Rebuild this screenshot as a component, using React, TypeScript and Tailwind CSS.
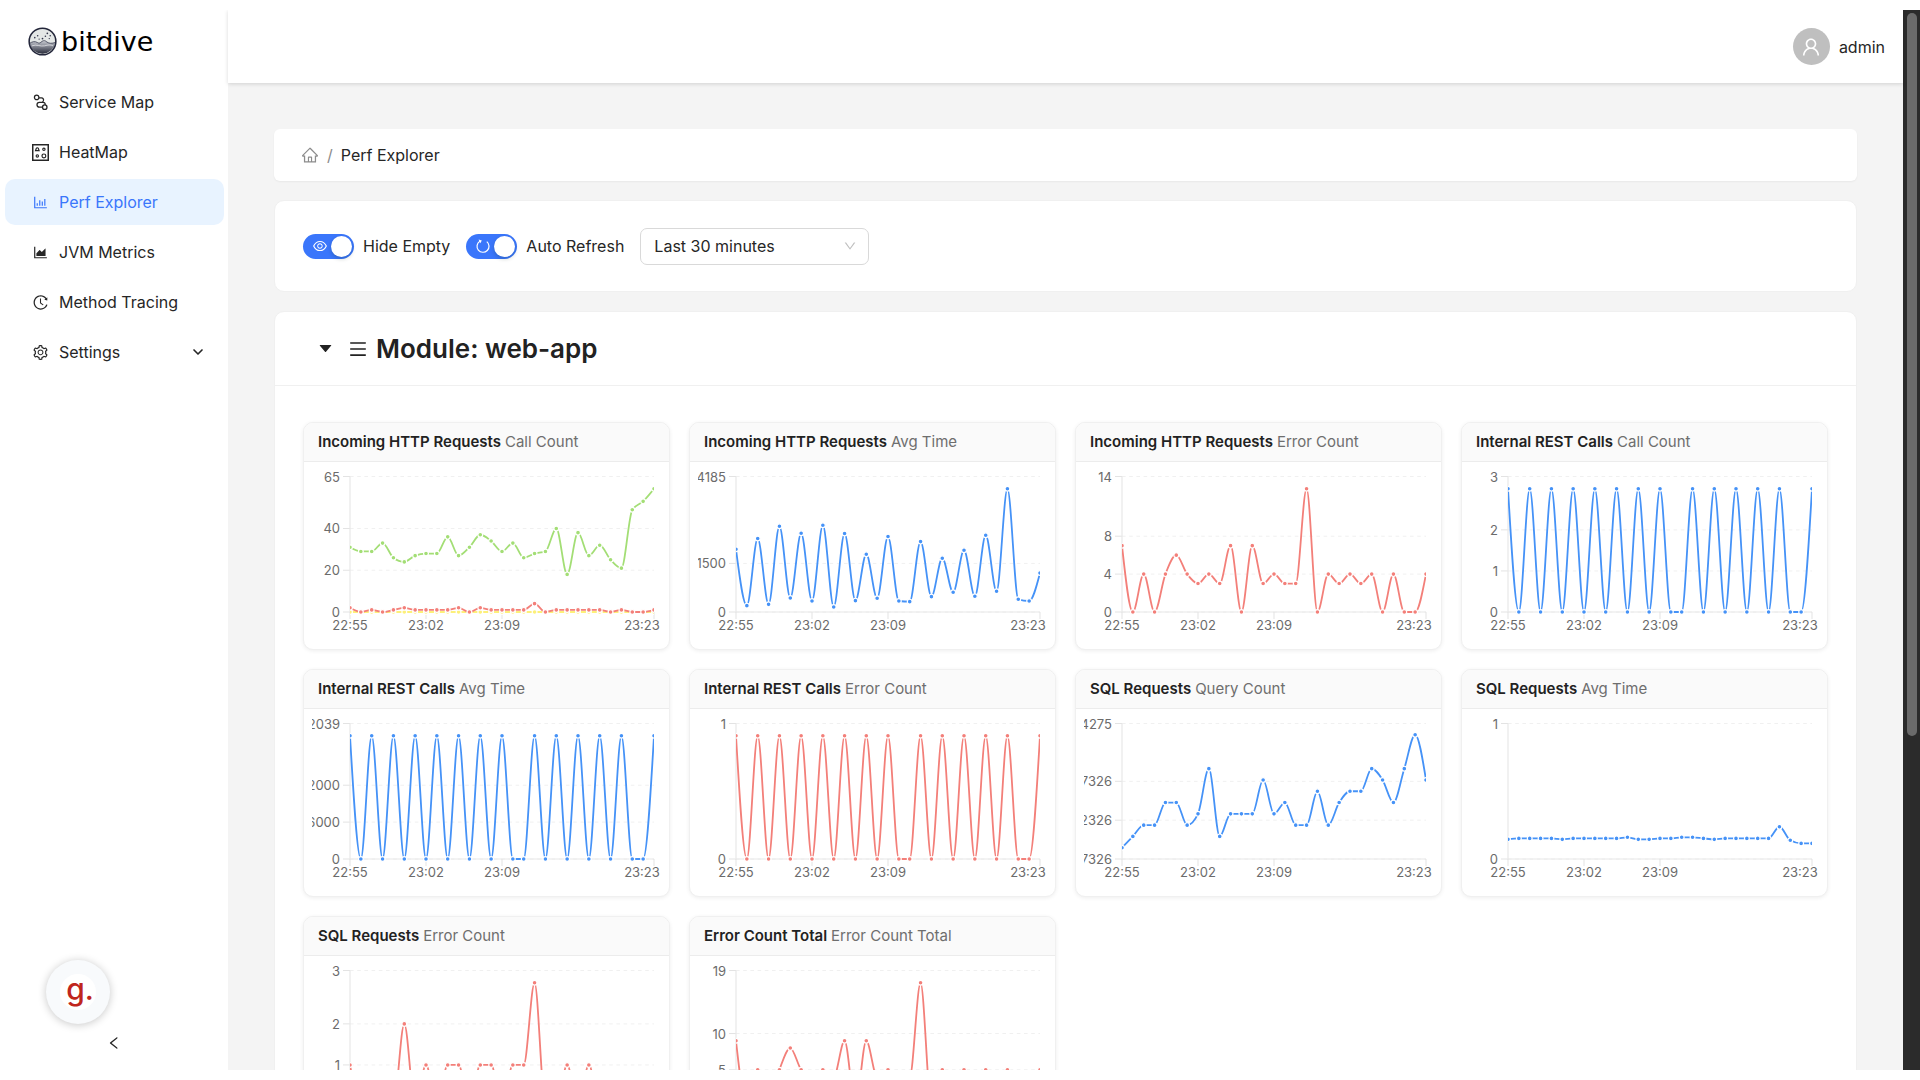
import { useId } from "react";
import {
  AiFillCaretDown,
  AiOutlineAreaChart,
  AiOutlineBarChart,
  AiOutlineDown,
  AiOutlineEye,
  AiOutlineHistory,
  AiOutlineHome,
  AiOutlineLeft,
  AiOutlineMenu,
  AiOutlineSetting,
  AiOutlineUser,
} from "react-icons/ai";
import { FiChevronDown } from "react-icons/fi";

const GREEN = "#a3de75";
const YELLOW = "#fdf07a";
const RED = "#f37f79";
const BLUE = "#4592f7";

type Series = { color: string; values: number[] };
type Tick = { at: number; label: string };
type Metric = { group: string; name: string; max: number; ticks: Tick[]; series: Series[] };

const ticks = (...values: number[]): Tick[] => values.map((v) => ({ at: v, label: String(Math.round(v)) }));

const pulses = (peak: number) =>
  [1, 0, 1, 0, 1, 0, 1, 0, 1, 0, 1, 0, 1, 0, 1, 0, 0, 1, 0, 1, 0, 1, 0, 1, 0, 1, 0, 0, 1].map((v) => v * peak);

const metrics: Metric[] = [
  {
    group: "Incoming HTTP Requests",
    name: "Call Count",
    max: 64.9,
    ticks: ticks(0, 20, 40, 64.9),
    series: [
      { color: YELLOW, values: Array(29).fill(0) },
      { color: RED, values: [2, 0, 1, 0, 1, 2, 1, 1, 1, 1, 2, 0, 2, 1, 1, 1, 1, 4, 0, 1, 1, 1, 1, 1, 0, 1, 0, 0, 1] },
      {
        color: GREEN,
        values: [31, 29, 29, 33, 26, 24, 27, 28, 28, 36, 27, 31, 37, 34, 29, 33, 26, 28, 29, 40, 18, 38, 27, 32, 25, 21, 49, 53, 59],
      },
    ],
  },
  {
    group: "Incoming HTTP Requests",
    name: "Avg Time",
    max: 4185,
    ticks: ticks(0, 1500, 4185),
    series: [
      {
        color: BLUE,
        values: [
          1938, 196, 2268, 237, 2649, 433, 2433, 340, 2680, 155, 2423, 350, 1783, 423, 2330, 340, 320, 2175, 474, 1660, 608, 1907,
          485, 2371, 639, 3805, 392, 340, 1206,
        ],
      },
    ],
  },
  {
    group: "Incoming HTTP Requests",
    name: "Error Count",
    max: 14.3,
    ticks: ticks(0, 4, 8, 14.3),
    series: [{ color: RED, values: [7, 0, 4, 0, 4, 6, 4, 3, 4, 3, 7, 0, 7, 3, 4, 3, 3, 13, 0, 4, 3, 4, 3, 4, 0, 4, 0, 0, 4] }],
  },
  {
    group: "Internal REST Calls",
    name: "Call Count",
    max: 3.3,
    ticks: ticks(0, 1, 2, 3.3),
    series: [{ color: BLUE, values: pulses(3) }],
  },
  {
    group: "Internal REST Calls",
    name: "Avg Time",
    max: 22039,
    ticks: ticks(0, 6000, 12000, 22039),
    series: [{ color: BLUE, values: pulses(20035) }],
  },
  {
    group: "Internal REST Calls",
    name: "Error Count",
    max: 1.1,
    ticks: ticks(0, 1.1),
    series: [{ color: RED, values: pulses(1) }],
  },
  {
    group: "SQL Requests",
    name: "Query Count",
    max: 12,
    ticks: [
      { at: 0, label: "47326" },
      { at: 3.44, label: "52326" },
      { at: 6.88, label: "57326" },
      { at: 12, label: "64275" },
    ],
    series: [{ color: BLUE, values: [1, 2, 3, 3, 5, 5, 3, 4, 8, 2, 4, 4, 4, 7, 4, 5, 3, 3, 6, 3, 5, 6, 6, 8, 7, 5, 8, 11, 7] }],
  },
  {
    group: "SQL Requests",
    name: "Avg Time",
    max: 1,
    ticks: ticks(0, 1),
    series: [
      {
        color: BLUE,
        values: [
          0.145, 0.152, 0.152, 0.152, 0.152, 0.145, 0.152, 0.152, 0.152, 0.152, 0.152, 0.16, 0.145, 0.145, 0.152, 0.152, 0.16,
          0.16, 0.152, 0.145, 0.152, 0.152, 0.152, 0.152, 0.152, 0.238, 0.138, 0.115, 0.115,
        ],
      },
    ],
  },
  {
    group: "SQL Requests",
    name: "Error Count",
    max: 3.3,
    ticks: ticks(0, 1, 2, 3.3),
    series: [{ color: RED, values: [1, 0, 0, 0, 0, 2, 0, 1, 0, 1, 1, 0, 1, 1, 0, 1, 1, 3, 0, 0, 1, 0, 1, 0, 0, 0, 0, 0, 0] }],
  },
  {
    group: "Error Count Total",
    name: "Error Count Total",
    max: 18.7,
    ticks: ticks(0, 5, 10, 18.7),
    series: [{ color: RED, values: [9, 0, 5, 0, 5, 8, 5, 4, 5, 4, 9, 0, 9, 4, 5, 4, 4, 17, 0, 5, 4, 5, 4, 5, 0, 5, 0, 0, 5] }],
  },
];

// plot area inside the 349x171 chart
const X0 = 38;
const X1 = 342;
const Y0 = 142;
const Y1 = 6.5;

// monotone cubic interpolation, so the curve never overshoots a sample
function monotonePath(pts: [number, number][]) {
  const slope = (i: number) => (pts[i + 1][1] - pts[i][1]) / (pts[i + 1][0] - pts[i][0]);
  const last = pts.length - 1;
  const m = pts.map((_, i) => {
    if (i === 0 || i === last) return 0;
    const a = slope(i - 1);
    const b = slope(i);
    if (a * b <= 0) return 0;
    return Math.sign(a) * 2 * Math.min(Math.abs(a), Math.abs(b), Math.abs(a + b) / 4);
  });
  m[0] = (3 * slope(0) - m[1]) / 2;
  m[last] = (3 * slope(last - 1) - m[last - 1]) / 2;
  let d = `M${pts[0][0]},${pts[0][1]}`;
  for (let i = 0; i < last; i++) {
    const [xa, ya] = pts[i];
    const [xb, yb] = pts[i + 1];
    const h = (xb - xa) / 3;
    d += `C${xa + h},${ya + h * m[i]} ${xb - h},${yb - h * m[i + 1]} ${xb},${yb}`;
  }
  return d;
}

function Chart({ metric }: { metric: Metric }) {
  const clip = useId();
  const y = (v: number) => Y0 - (v / metric.max) * (Y0 - Y1);
  const x = (i: number) => X0 + (i * (X1 - X0)) / 28;
  const times = [
    { i: 0, label: "22:55", cx: x(0) },
    { i: 7, label: "23:02", cx: x(7) },
    { i: 14, label: "23:09", cx: x(14) },
    { i: 28, label: "23:23", cx: 330 },
  ];
  return (
    <svg viewBox="0 0 349 171" className="block h-auto w-full overflow-hidden" role="img" aria-label={`${metric.group} ${metric.name}`}>
      <clipPath id={clip}>
        <rect x={X0} y={Y1 - 4} width={X1 - X0} height={Y0 - Y1 + 8} />
      </clipPath>
      {metric.ticks.map((t) => (
        <g key={t.at}>
          <line x1={X0} x2={X1} y1={y(t.at)} y2={y(t.at)} stroke="#f0f0f0" strokeDasharray="3.6 3.6" />
          <line x1={X0 - 7} x2={X0} y1={y(t.at)} y2={y(t.at)} stroke="#e3e3e3" />
          <text x={28} y={y(t.at) + 5} textAnchor="end" className="fill-[#6b6b6b] text-[13px]">
            {t.label}
          </text>
        </g>
      ))}
      <path d={`M${X0},${Y1}V${Y0}H${X1}`} fill="none" stroke="#e8e8e8" strokeWidth="1.2" />
      {times.map((t) => (
        <g key={t.i}>
          <line x1={x(t.i)} x2={x(t.i)} y1={Y0} y2={Y0 + 7} stroke="#e3e3e3" />
          <text x={t.cx} y={160} textAnchor="middle" className="fill-[#6b6b6b] text-[13px]">
            {t.label}
          </text>
        </g>
      ))}
      <g clipPath={`url(#${clip})`}>
        {metric.series.map((s) => (
          <g key={s.color}>
            <path d={monotonePath(s.values.map((v, i) => [x(i), y(v)]))} fill="none" stroke={s.color} strokeWidth="1.8" />
            {s.values.map((v, i) => (
              <circle key={i} cx={x(i)} cy={y(v)} r="2.4" fill={s.color} stroke="#fff" strokeWidth="1.2" />
            ))}
          </g>
        ))}
      </g>
    </svg>
  );
}

function MetricCard({ metric }: { metric: Metric }) {
  return (
    <article className="overflow-hidden rounded-[10px] border border-[#f0f0f0] bg-white shadow-[0_1px_4px_rgba(0,0,0,0.07)]">
      <h3 className="flex h-[39px] items-center gap-1 border-b border-[#ececec] bg-[#fafafa] px-[14px] text-[15px] text-[#6e6e6e]">
        <strong className="font-semibold text-[#222]">{metric.group}</strong>
        {metric.name}
      </h3>
      <div className="p-2">
        <Chart metric={metric} />
      </div>
    </article>
  );
}

function ServiceMapIcon() {
  return (
    <svg viewBox="0 0 16 16" className="size-[17px]" fill="none" stroke="currentColor" strokeWidth="1.2">
      <circle cx="4.4" cy="3.2" r="2.1" />
      <circle cx="12" cy="12.4" r="2.1" />
      <path d="M6.5 3.6h2.4a2 2 0 0 1 1.7 3L9.8 7.8M9.8 7.8H7a2.3 2.3 0 0 0 0 4.6h2.9M9.2 7.8h1.4a2 2 0 0 1 1.8 2.4" />
    </svg>
  );
}

function HeatMapIcon() {
  return (
    <svg viewBox="0 0 16 16" className="size-[17px]" fill="none" stroke="currentColor">
      <rect x="0.7" y="0.7" width="14.6" height="14.6" strokeWidth="1.4" />
      <path d="M3.3 6.2h3.4L6 4.2a1.1 1.1 0 0 0-2 0z" strokeWidth="1.1" />
      <circle cx="11.2" cy="5" r="1.1" strokeWidth="1.1" />
      <circle cx="5" cy="11.2" r="1.1" strokeWidth="1.1" />
      <circle cx="11.2" cy="11.2" r="1.8" strokeWidth="1.1" />
    </svg>
  );
}

function ReloadIcon() {
  return (
    <svg viewBox="0 0 16 16" className="size-4" fill="none" stroke="currentColor" strokeWidth="1.2">
      <path d="M4.8 3.2a6 6 0 1 0 7 .4" />
      <path d="M3.6 1.6l3.2.9-1.5 2.7z" fill="currentColor" stroke="none" />
    </svg>
  );
}

function Logo() {
  return (
    <a href="#" className="flex h-[29px] items-center gap-1 text-black">
      <svg viewBox="0 0 30 30" className="size-[29px]">
        <defs>
          <linearGradient id="sea" x1="0" y1="0" x2="0" y2="1">
            <stop offset="0" stopColor="#c9ccd3" />
            <stop offset="1" stopColor="#2b2e3d" />
          </linearGradient>
        </defs>
        <circle cx="15" cy="15" r="13.8" fill="#e4e7e6" />
        <path d="M1.6 17c3-2 5.4-2.5 8-1 2 1.2 3 .6 5-1.2 1.8-1.2 3.4-.8 5 .8 2.6 1.6 5 1.6 8.7.4A13.6 13.6 0 0 1 1.6 17z" fill="url(#sea)" />
        <path d="M1.6 17c3-2 5.4-2.5 8-1 2 1.2 3 .6 5-1.2 1.8-1.2 3.4-.8 5 .8 2.6 1.6 5 1.6 8.7.4" fill="none" stroke="#33364a" strokeWidth="0.8" />
        <path d="M4 19.5c5-2 9 1 13 0s6-1.5 9 0" fill="none" stroke="#f1f2f4" strokeWidth="1" opacity="0.7" />
        <g fill="#33364a">
          <circle cx="7" cy="11" r="0.8" />
          <circle cx="10" cy="9" r="0.8" />
          <circle cx="11.5" cy="12.5" r="0.7" />
          <circle cx="15" cy="12" r="0.9" />
          <circle cx="18" cy="9.5" r="0.8" />
          <circle cx="20" cy="6.5" r="0.9" />
          <circle cx="23" cy="9" r="0.8" />
          <circle cx="22" cy="12" r="0.7" />
        </g>
        <circle cx="15" cy="15" r="13.8" fill="none" stroke="#23263a" strokeWidth="1.6" />
      </svg>
      <span className="font-['DejaVu_Sans',sans-serif] text-[27px] leading-[29px]">bitdive</span>
    </a>
  );
}

const nav = [
  { label: "Service Map", icon: <ServiceMapIcon /> },
  { label: "HeatMap", icon: <HeatMapIcon /> },
  { label: "Perf Explorer", icon: <AiOutlineBarChart className="size-[17px]" />, active: true },
  { label: "JVM Metrics", icon: <AiOutlineAreaChart className="size-[17px]" /> },
  { label: "Method Tracing", icon: <AiOutlineHistory className="size-[17px]" /> },
  { label: "Settings", icon: <AiOutlineSetting className="size-[17px]" />, expandable: true },
];

function Sidebar() {
  return (
    <aside className="relative flex w-[228px] shrink-0 flex-col bg-white pt-[17px]">
      <div className="px-7">
        <Logo />
      </div>
      <nav className="mt-[23px] flex flex-col gap-1 pr-1 pl-[5px]">
        {nav.map((item) => (
          <a
            key={item.label}
            href="#"
            className={
              item.active
                ? "flex h-[46px] items-center gap-[10px] rounded-[10px] bg-[#e8f3ff] pr-[18px] pl-[27px] text-[#3a76fb]"
                : "flex h-[46px] items-center gap-[10px] rounded-[10px] pr-[18px] pl-[27px]"
            }
          >
            {item.icon}
            <span className="flex-1">{item.label}</span>
            {item.expandable && <FiChevronDown className="size-4 stroke-[2.5]" />}
          </a>
        ))}
      </nav>
      <button
        type="button"
        aria-label="Help"
        className="absolute bottom-[46px] left-[46px] flex size-16 items-center justify-center rounded-full bg-[#f8fafc] shadow-[0_1px_8px_rgba(0,0,0,0.22)]"
      >
        <span className="flex size-9 items-center justify-center rounded-full bg-white pb-[6px] pl-1 text-[30px] leading-9 font-medium text-[#c0261d]">
          g.
        </span>
      </button>
      <button type="button" aria-label="Collapse menu" className="mt-auto flex h-[54px] items-center justify-center">
        <AiOutlineLeft className="size-4" />
      </button>
    </aside>
  );
}

function Switch({ label, icon }: { label: string; icon: React.ReactNode }) {
  return (
    <label className="flex items-center gap-[9px]">
      <span className="relative flex h-[25px] w-[51px] items-center rounded-full bg-[#3a76fb] pl-[9px] text-white">
        <input type="checkbox" defaultChecked className="absolute inset-0 size-full cursor-pointer appearance-none rounded-full" />
        {icon}
        <span className="ml-auto mr-[2px] size-[21px] rounded-full bg-white shadow-[0_2px_4px_rgba(0,35,11,0.2)]" />
      </span>
      {label}
    </label>
  );
}

export default function App() {
  return (
    <div className="h-screen overflow-hidden bg-white py-[10px] font-['Inter',sans-serif] text-[16px] leading-6 text-[#262626]">
      <div className="flex h-full overflow-hidden">
        <Sidebar />
        <div className="flex min-w-0 flex-1 flex-col bg-[#f4f4f4]">
          <header className="z-10 flex h-[73px] shrink-0 items-center justify-end gap-[9px] bg-white pr-[18px] shadow-[0_1px_4px_rgba(0,0,0,0.15)]">
            <span className="flex size-[37px] items-center justify-center rounded-full bg-[#bfbfbf] text-white">
              <AiOutlineUser className="size-[22px]" />
            </span>
            admin
          </header>
          <main className="min-h-0 flex-1 overflow-hidden px-[46px] pt-[46px]">
            <nav aria-label="Breadcrumb" className="flex h-[52px] items-center gap-2 rounded-[6px] bg-white px-[27px] text-[#8c8c8c] shadow-xs">
              <a href="#" aria-label="Home">
                <AiOutlineHome className="size-[18px]" />
              </a>
              <span>/</span>
              <span className="text-[#262626]">Perf Explorer</span>
            </nav>
            <section className="mt-[19px] flex h-[92px] items-center gap-4 rounded-[10px] border border-[#f0f0f0] bg-white px-[28px]">
              <Switch label="Hide Empty" icon={<AiOutlineEye className="size-4" />} />
              <Switch label="Auto Refresh" icon={<ReloadIcon />} />
              <span className="relative">
                <select
                  aria-label="Time range"
                  defaultValue="30"
                  className="block h-[37px] w-[229px] appearance-none rounded-[7px] border border-[#d9d9d9] bg-white px-[13px]"
                >
                  <option value="15">Last 15 minutes</option>
                  <option value="30">Last 30 minutes</option>
                  <option value="60">Last 1 hour</option>
                </select>
                <AiOutlineDown className="pointer-events-none absolute top-[11px] right-[12px] size-[14px] text-[#bfbfbf]" />
              </span>
            </section>
            <section className="mt-[19px] rounded-[10px] border border-[#f0f0f0] bg-white">
              <h2 className="flex h-[74px] items-center border-b border-[#f0f0f0] px-[42px] text-[26px] leading-8 font-semibold text-[#222]">
                <AiFillCaretDown className="size-[17px]" />
                <AiOutlineMenu className="ml-[14px] mr-2 size-5" />
                Module: web-app
              </h2>
              <div className="grid grid-cols-4 gap-[19px] px-[28px] py-9">
                {metrics.map((m) => (
                  <MetricCard key={m.group + m.name} metric={m} />
                ))}
              </div>
            </section>
          </main>
        </div>
        <div aria-hidden="true" className="flex w-[17px] shrink-0 justify-center bg-[#2b2b2b] pt-[3px]">
          <div className="h-[68.4%] w-[10px] rounded-full bg-[#6b6b6b]" />
        </div>
      </div>
    </div>
  );
}
